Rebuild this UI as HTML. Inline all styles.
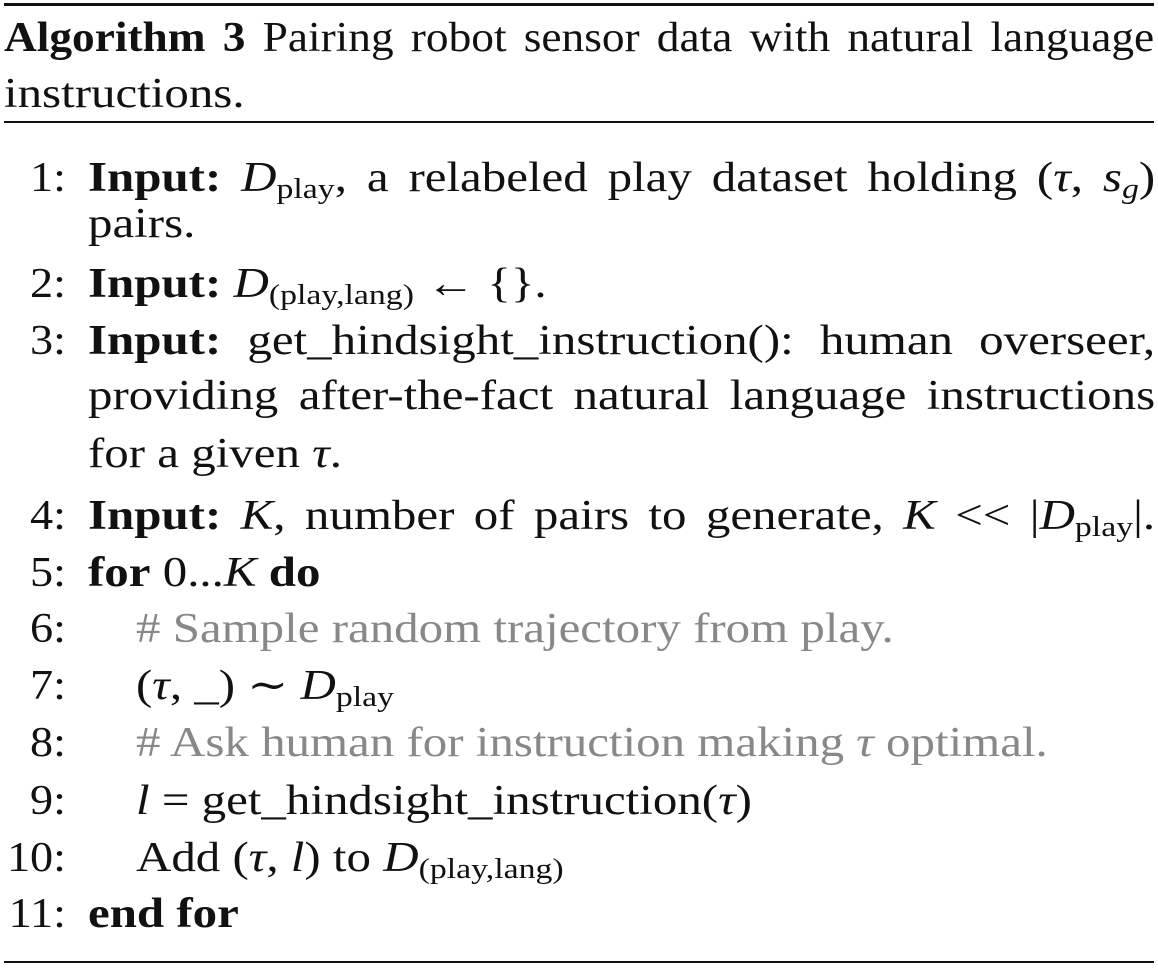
<!DOCTYPE html>
<html><head><meta charset="utf-8"><style>
body{margin:0;width:1158px;height:970px;background:#fff;position:relative;overflow:hidden;font-family:"Liberation Serif","DejaVu Serif",serif;color:#111;}
.l{position:absolute;font-size:42px;line-height:40px;white-space:nowrap;transform:scaleX(1.165);transform-origin:0 0;}
.n{position:absolute;font-size:42px;line-height:40px;width:66px;text-align:right;left:0;transform:scaleX(1.1);transform-origin:100% 0;}
.j{width:916px;text-align:justify;text-align-last:justify;white-space:normal;}
sub{font-size:29px;vertical-align:-7px;line-height:0;}
.g{color:#888;}
.r{position:absolute;left:4px;width:1150px;background:#111;}
b{font-weight:bold;}
</style></head><body>
<div class="r" style="top:3px;height:3px"></div>
<div class="l j" style="left:4px;top:18px;width:1065px;transform:scaleX(1.08)"><b>Algorithm 3</b> Pairing robot sensor data with natural language</div>
<div class="l" style="left:4px;top:74px">instructions.</div>
<div class="r" style="top:121px;height:2px"></div>

<div class="n" style="top:158px">1:</div>
<div class="l j" style="left:88px;top:158px"><b>Input:</b> <i>D</i><sub>play</sub>, a relabeled play dataset holding (<i>τ</i>, <i>s<sub>g</sub></i>)</div>
<div class="l" style="left:88px;top:204px">pairs.</div>

<div class="n" style="top:264px">2:</div>
<div class="l" style="left:88px;top:264px"><b>Input:</b> <i>D</i><sub>(play,lang)</sub> ← {}.</div>

<div class="n" style="top:321px">3:</div>
<div class="l j" style="left:88px;top:321px"><b>Input:</b> get_hindsight_instruction(): human overseer,</div>
<div class="l j" style="left:88px;top:376px">providing after-the-fact natural language instructions</div>
<div class="l" style="left:88px;top:434px">for a given <i>τ</i>.</div>

<div class="n" style="top:496px">4:</div>
<div class="l j" style="left:88px;top:496px"><b>Input:</b> <i>K</i>, number of pairs to generate, <i>K</i> &lt;&lt; |<i>D</i><sub>play</sub>|.</div>

<div class="n" style="top:553px">5:</div>
<div class="l" style="left:88px;top:553px"><b>for</b> 0...<i>K</i> <b>do</b></div>

<div class="n" style="top:609px">6:</div>
<div class="l g" style="left:136px;top:609px"># Sample random trajectory from play.</div>

<div class="n" style="top:666px">7:</div>
<div class="l" style="left:136px;top:666px">(<i>τ</i>, _) ∼ <i>D</i><sub>play</sub></div>

<div class="n" style="top:723px">8:</div>
<div class="l g" style="left:136px;top:723px"># Ask human for instruction making <i>τ</i> optimal.</div>

<div class="n" style="top:781px">9:</div>
<div class="l" style="left:136px;top:781px"><i>l</i> = get_hindsight_instruction(<i>τ</i>)</div>

<div class="n" style="top:838px">10:</div>
<div class="l" style="left:136px;top:838px">Add (<i>τ</i>, <i>l</i>) to <i>D</i><sub>(play,lang)</sub></div>

<div class="n" style="top:894px">11:</div>
<div class="l" style="left:88px;top:894px"><b>end for</b></div>

<div class="r" style="top:961px;height:2px"></div>
</body></html>
